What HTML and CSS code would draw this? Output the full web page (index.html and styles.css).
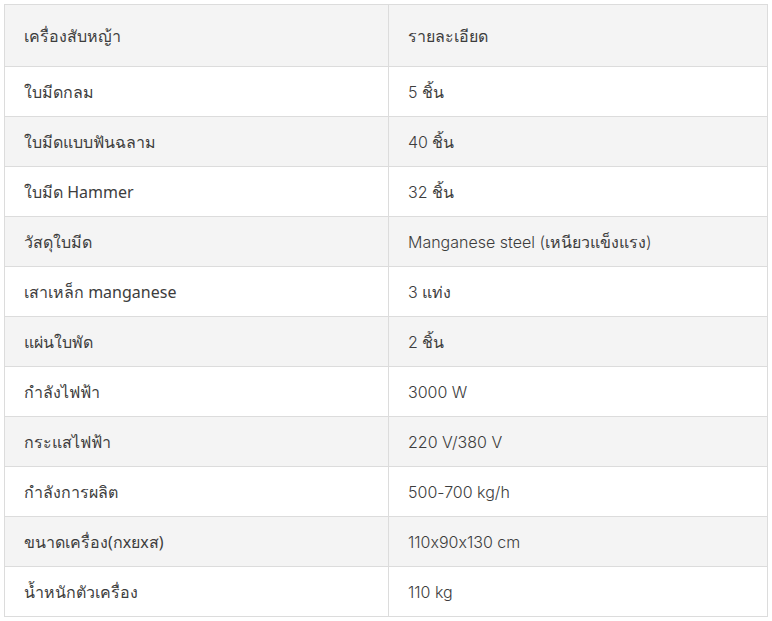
FILE: index.html
```html
<!DOCTYPE html>
<html lang="th">
<head>
<meta charset="utf-8">
<link rel="stylesheet" href="styles.css">
</head>
<body>
<table class="spec">
  <thead>
    <tr><th>เครื่องสับหญ้า</th><th class="val">รายละเอียด</th></tr>
  </thead>
  <tbody>
    <tr><td>ใบมีดกลม</td><td class="val">5 ชิ้น</td></tr>
    <tr><td>ใบมีดแบบฟันฉลาม</td><td class="val">40 ชิ้น</td></tr>
    <tr><td>ใบมีด Hammer</td><td class="val">32 ชิ้น</td></tr>
    <tr><td>วัสดุใบมีด</td><td class="val">Manganese steel (เหนียวแข็งแรง)</td></tr>
    <tr><td>เสาเหล็ก manganese</td><td class="val">3 แท่ง</td></tr>
    <tr><td>แผ่นใบพัด</td><td class="val">2 ชิ้น</td></tr>
    <tr><td>กำลังไฟฟ้า</td><td class="val">3000 W</td></tr>
    <tr><td>กระแสไฟฟ้า</td><td class="val">220 V/380 V</td></tr>
    <tr><td>กำลังการผลิต</td><td class="val">500-700 kg/h</td></tr>
    <tr><td>ขนาดเครื่อง(กxยxส)</td><td class="val">110x90x130 cm</td></tr>
    <tr><td>น้ำหนักตัวเครื่อง</td><td class="val">110 kg</td></tr>
  </tbody>
</table>
</body>
</html>
```
FILE: styles.css
```css
html, body { margin: 0; padding: 0; background: #fff; }
body { padding: 4px; }
.spec {
  border-collapse: collapse;
  width: 764px;
  table-layout: fixed;
  font-family: "Noto Sans", "DejaVu Sans", sans-serif;
  font-size: 16px;
  color: #3d3d3d;
}
.spec th, .spec td {
  border: 1px solid #dcdcdc;
  text-align: left;
  font-weight: normal;
  padding: 1px 19px 0;
  height: 48px;
}
.spec .val {
  font-family: Inter, "Noto Sans", sans-serif;
  font-weight: 300;
  font-size: 16px;
  font-feature-settings: "calt" 0;
  font-variant-ligatures: none;
}
.spec th:first-child, .spec td:first-child { width: 345px; }
.spec th { height: 60px; background: #f4f4f4; }
.spec tbody tr:nth-child(even) td { background: #f4f4f4; }
```
